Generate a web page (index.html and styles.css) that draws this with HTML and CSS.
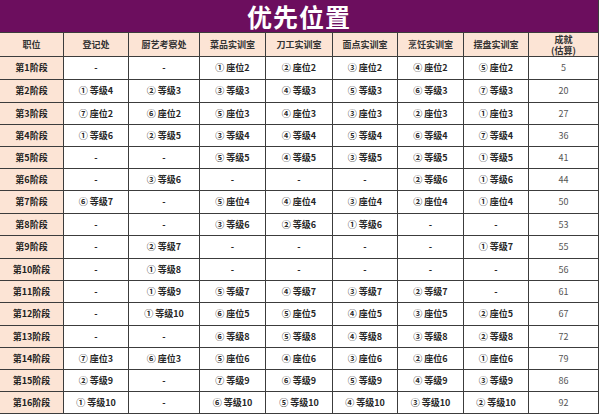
FILE: index.html
```html
<!DOCTYPE html>
<html lang="zh">
<head>
<meta charset="utf-8">
<link rel="stylesheet" href="styles.css">
</head>
<body>
<div class="sheet">
  <div class="title">优先位置</div>

  <div class="h">职位</div><div class="h">登记处</div><div class="h">厨艺考察处</div><div class="h">菜品实训室</div><div class="h">刀工实训室</div><div class="h">面点实训室</div><div class="h">烹饪实训室</div><div class="h">摆盘实训室</div><div class="h two"><span>成就</span><span>(估算)</span></div>

  <div class="s">第1阶段</div><div class="c">-</div><div class="c">-</div><div class="c">① 座位2</div><div class="c">② 座位2</div><div class="c">③ 座位2</div><div class="c">④ 座位2</div><div class="c">⑤ 座位2</div><div class="n">5</div>
  <div class="s">第2阶段</div><div class="c">① 等级4</div><div class="c">② 等级3</div><div class="c">③ 等级3</div><div class="c">④ 等级3</div><div class="c">⑤ 等级3</div><div class="c">⑥ 等级3</div><div class="c">⑦ 等级3</div><div class="n">20</div>
  <div class="s">第3阶段</div><div class="c">⑦ 座位2</div><div class="c">⑥ 座位2</div><div class="c">⑤ 座位3</div><div class="c">④ 座位3</div><div class="c">③ 座位3</div><div class="c">② 座位3</div><div class="c">① 座位3</div><div class="n">27</div>
  <div class="s">第4阶段</div><div class="c">① 等级6</div><div class="c">② 等级5</div><div class="c">③ 等级4</div><div class="c">④ 等级4</div><div class="c">⑤ 等级4</div><div class="c">⑥ 等级4</div><div class="c">⑦ 等级4</div><div class="n">36</div>
  <div class="s">第5阶段</div><div class="c">-</div><div class="c">-</div><div class="c">⑤ 等级5</div><div class="c">④ 等级5</div><div class="c">③ 等级5</div><div class="c">② 等级5</div><div class="c">① 等级5</div><div class="n">41</div>
  <div class="s">第6阶段</div><div class="c">-</div><div class="c">③ 等级6</div><div class="c">-</div><div class="c">-</div><div class="c">-</div><div class="c">② 等级6</div><div class="c">① 等级6</div><div class="n">44</div>
  <div class="s">第7阶段</div><div class="c">⑥ 等级7</div><div class="c">-</div><div class="c">⑤ 座位4</div><div class="c">④ 座位4</div><div class="c">③ 座位4</div><div class="c">② 座位4</div><div class="c">① 座位4</div><div class="n">50</div>
  <div class="s">第8阶段</div><div class="c">-</div><div class="c">-</div><div class="c">③ 等级6</div><div class="c">② 等级6</div><div class="c">① 等级6</div><div class="c">-</div><div class="c">-</div><div class="n">53</div>
  <div class="s">第9阶段</div><div class="c">-</div><div class="c">② 等级7</div><div class="c">-</div><div class="c">-</div><div class="c">-</div><div class="c">-</div><div class="c">① 等级7</div><div class="n">55</div>
  <div class="s">第10阶段</div><div class="c">-</div><div class="c">① 等级8</div><div class="c">-</div><div class="c">-</div><div class="c">-</div><div class="c">-</div><div class="c">-</div><div class="n">56</div>
  <div class="s">第11阶段</div><div class="c">-</div><div class="c">① 等级9</div><div class="c">⑤ 等级7</div><div class="c">④ 等级7</div><div class="c">③ 等级7</div><div class="c">② 等级7</div><div class="c">-</div><div class="n">61</div>
  <div class="s">第12阶段</div><div class="c">-</div><div class="c">① 等级10</div><div class="c">⑥ 座位5</div><div class="c">⑤ 座位5</div><div class="c">④ 座位5</div><div class="c">③ 座位5</div><div class="c">② 座位5</div><div class="n">67</div>
  <div class="s">第13阶段</div><div class="c">-</div><div class="c">-</div><div class="c">⑥ 等级8</div><div class="c">⑤ 等级8</div><div class="c">④ 等级8</div><div class="c">③ 等级8</div><div class="c">② 等级8</div><div class="n">72</div>
  <div class="s">第14阶段</div><div class="c">⑦ 座位3</div><div class="c">⑥ 座位3</div><div class="c">⑤ 座位6</div><div class="c">④ 座位6</div><div class="c">③ 座位6</div><div class="c">② 座位6</div><div class="c">① 座位6</div><div class="n">79</div>
  <div class="s">第15阶段</div><div class="c">② 等级9</div><div class="c">-</div><div class="c">⑦ 等级9</div><div class="c">⑥ 等级9</div><div class="c">⑤ 等级9</div><div class="c">④ 等级9</div><div class="c">③ 等级9</div><div class="n">86</div>
  <div class="s">第16阶段</div><div class="c">① 等级10</div><div class="c">-</div><div class="c">⑥ 等级10</div><div class="c">⑤ 等级10</div><div class="c">④ 等级10</div><div class="c">③ 等级10</div><div class="c">② 等级10</div><div class="n">92</div>
</div>
</body>
</html>
```

FILE: styles.css
```css
html, body {
  margin: 0;
  padding: 0;
  background: #ffffff;
}

body {
  font-family: "Noto Sans CJK SC", "Noto Sans", sans-serif;
}

.sheet {
  display: grid;
  width: 598px;
  padding: 0 1px 1px 0;
  gap: 1px;
  background: #3c3c3c;
  grid-template-columns: 63px 64px 70px 65px 66px 64px 65px 64px 69px;
  grid-template-rows: 32px 23px 22px 22px 21px 21px 21px 21px 22px 21px 22px 21px 21px 22px 21px 21px 21px 21px;
}

.title {
  grid-column: 1 / -1;
  background: #6c0e5e;
  color: #ffffff;
  font-size: 25px;
  font-weight: 700;
  letter-spacing: 1px;
  display: flex;
  align-items: center;
  justify-content: center;
  line-height: 32px;
}

.h, .s, .c, .n {
  display: flex;
  align-items: center;
  justify-content: center;
  text-align: center;
  font-size: 9px;
  line-height: 12px;
  white-space: nowrap;
}

.h {
  background: #fce4d5;
  color: #333333;
  font-weight: 700;
}

.two {
  flex-direction: column;
  line-height: 11px;
}

.two span {
  display: block;
  height: 11px;
}

.s {
  background: #fce4d5;
  color: #222222;
  font-weight: 700;
}

.c {
  background: #ffffff;
  color: #262626;
  font-weight: 700;
}

.n {
  background: #ffffff;
  color: #555555;
  font-weight: 400;
}
```
